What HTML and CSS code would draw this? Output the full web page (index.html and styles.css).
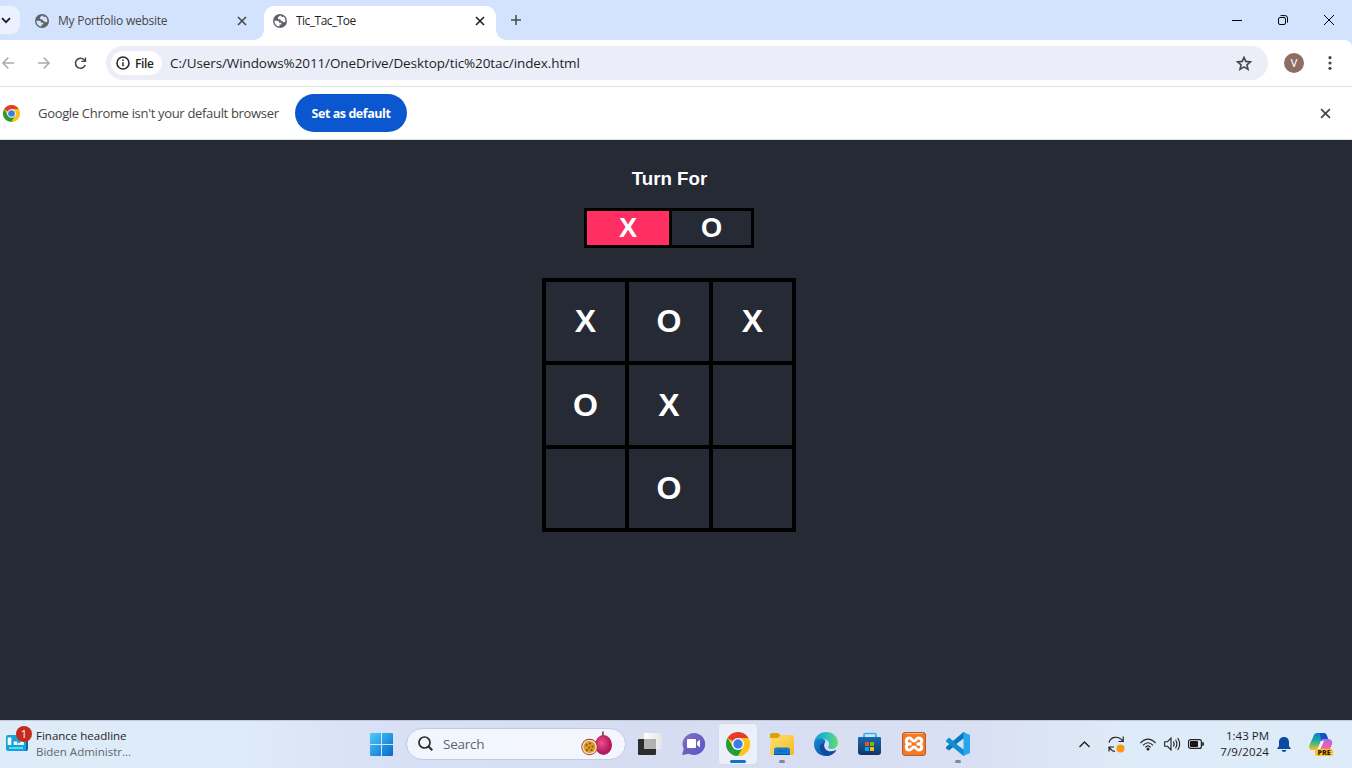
FILE: index.html
```html
<!DOCTYPE html>
<html lang="en">
<head>
<meta charset="utf-8">
<title>Tic_Tac_Toe</title>
<link rel="stylesheet" href="styles.css">
</head>
<body>
<svg class="defs" width="0" height="0" aria-hidden="true">
  <defs>
    <symbol id="globe" viewBox="0 0 14 14"><circle cx="7" cy="7" r="7" fill="#5f6368"/><path d="M7.800 1.500C6 2.300 4.600 3 5 4.500C5.600 5.800 7 4.900 7.600 5.900C8 7.200 9.700 7 10.200 7.900C10.600 8.600 11.800 8 12.400 7.400C12.600 5 11.500 3.400 10.300 2.600C9.700 3.500 8.600 3.100 7.800 1.500Z" fill="var(--tab-bg)"/><path d="M1.400 6.800H4C5.300 6.800 6.200 7.600 6.200 8.800H8.300V10.400H6.500V12.500C3.600 12.300 1.300 10 1.400 6.800Z" fill="var(--tab-bg)"/></symbol>
    <symbol id="cross" viewBox="0 0 10 10"><path d="M1 1L9 9M9 1L1 9" stroke="currentColor" stroke-width="1.600" fill="none"/></symbol>
    <symbol id="chrome" viewBox="0 0 24 24"><circle cx="12" cy="12" r="12" fill="#fbc116"/><path d="M12 12L1.610 6A12 12 0 0 1 22.390 6L12 6Z" fill="#e33b2e"/><path d="M1.610 6A12 12 0 0 0 12 24L17.200 15L12 12L6.800 15Z" fill="#249a41"/><path d="M12 6H22.390A12 12 0 0 1 12 24L17.200 15Z" fill="#fcc31a"/><circle cx="12" cy="12" r="6" fill="#fff"/><circle cx="12" cy="12" r="4.700" fill="#3a7cec"/></symbol>
  </defs>
</svg>

<header class="tabstrip">
  <div class="tab-search"><svg width="10" height="7" viewBox="0 0 10 7"><path d="M1 1.200L5 5.200L9 1.200" fill="none" stroke="#1f1f1f" stroke-width="1.800"/></svg></div>
  <div class="tab">
    <svg width="14" height="14"><use href="#globe"/></svg>
    <span class="tab-title">My Portfolio website</span>
    <svg class="tab-close" width="10" height="10"><use href="#cross"/></svg>
  </div>
  <div class="tab tab-active">
    <svg width="14" height="14"><use href="#globe"/></svg>
    <span class="tab-title title-game">Tic_Tac_Toe</span>
    <svg class="tab-close" width="10" height="10"><use href="#cross"/></svg>
  </div>
  <svg class="new-tab" width="10" height="10" viewBox="0 0 10 10"><path d="M5 0V10M0 5H10" stroke="#474747" stroke-width="1.500"/></svg>
  <div class="window-buttons">
    <svg width="10" height="10" viewBox="0 0 10 10"><path d="M0 5.500H10" stroke="#000"/></svg>
    <svg width="10" height="10" viewBox="0 0 10 10"><rect x=".5" y="2.500" width="7" height="7" rx="1.500" fill="none" stroke="#000"/><path d="M2.500 .6H7Q9.500 .6 9.500 3V7.600" fill="none" stroke="#000"/></svg>
    <svg width="10" height="10" viewBox="0 0 10 10"><path d="M0 0L10 10M10 0L0 10" stroke="#000"/></svg>
  </div>
</header>

<nav class="toolbar">
  <svg width="12" height="12" viewBox="0 0 12 12"><path d="M12 6H1M6.300 .6L.9 6L6.300 11.400" fill="none" stroke="#acacac" stroke-width="1.500"/></svg>
  <svg class="forward" width="12" height="12" viewBox="0 0 12 12"><path d="M0 6H11M5.700 .6L11.100 6L5.700 11.400" fill="none" stroke="#acacac" stroke-width="1.500"/></svg>
  <svg class="reload" width="13" height="13" viewBox="0 0 13 13"><path d="M11.200 8A5 5 0 1 1 10.200 2.900L11.500 4" fill="none" stroke="#474747" stroke-width="1.600"/><path d="M12.200 .4V5.100H7.300V3.700L10.800 3.700V.4Z" fill="#474747"/></svg>
  <div class="omnibox">
    <div class="file-chip">
      <svg width="14" height="14" viewBox="0 0 14 14"><circle cx="7" cy="7" r="6" fill="none" stroke="#2a2a2a" stroke-width="1.600"/><path d="M7 6.300V10.300M7 3.500V5" stroke="#2a2a2a" stroke-width="1.500"/></svg>
      <span>File</span>
    </div>
    <span class="url">C:/Users/Windows%2011/OneDrive/Desktop/tic%20tac/index.html</span>
    <svg class="star" width="16" height="15" viewBox="0 0 16 15"><path d="M8 1.400L9.800 5.400L14.400 5.900L10.900 8.800L12 13.400L8 10.900L4 13.400L5.100 8.800L1.600 5.900L6.200 5.400Z" fill="none" stroke="#474747" stroke-width="1.600"/></svg>
  </div>
  <div class="avatar">V</div>
  <svg class="menu-dots" width="4" height="14" viewBox="0 0 4 14"><circle cx="2" cy="1.700" r="1.600" fill="#474747"/><circle cx="2" cy="7" r="1.600" fill="#474747"/><circle cx="2" cy="12.300" r="1.600" fill="#474747"/></svg>
</nav>

<section class="infobar">
  <svg width="17" height="17"><use href="#chrome"/></svg>
  <span class="info-text">Google Chrome isn't your default browser</span>
  <button class="default-button">Set as default</button>
  <svg class="info-close" width="11" height="11"><use href="#cross"/></svg>
</section>

<main class="game">
  <h3 class="turn-heading">Turn For</h3>
  <div class="turn-box"><div class="turn turn-current">X</div><div class="turn turn-next">O</div></div>
  <div class="board">
    <div>X</div><div>O</div><div>X</div>
    <div>O</div><div>X</div><div></div>
    <div></div><div>O</div><div></div>
  </div>
</main>

<footer class="taskbar">
  <div class="widget">
    <div class="widget-icon">
      <svg width="22" height="17" viewBox="0 0 22 17"><path d="M8 1H20Q22 1 22 3V14Q22 16 20 16H8Z" fill="#0867ad"/><rect y="0" width="20" height="16" rx="2" fill="#17a3d8"/><path d="M3.500 2.500V10M9.500 6.500V10M16 6.500V10" stroke="#fff" stroke-width="3.600"/><path d="M12.800 8V10" stroke="#fff" stroke-width="2"/><path d="M3 13H17" stroke="#45e0ff" stroke-width="2"/></svg>
      <span class="badge">1</span>
    </div>
    <div class="widget-text"><span class="headline">Finance headline</span><span class="subline">Biden Administr...</span></div>
  </div>

  <svg class="start" width="23" height="23" viewBox="0 0 23 23"><defs><linearGradient id="win" gradientUnits="userSpaceOnUse" x1="0" y1="0" x2="23" y2="23"><stop stop-color="#49cdfb"/><stop offset="1" stop-color="#0569c9"/></linearGradient></defs><path d="M0 1Q0 0 1 0H11V11H0ZM12 0H22Q23 0 23 1V11H12ZM0 12H11V23H1Q0 23 0 22ZM12 12H23V22Q23 23 22 23H12Z" fill="url(#win)"/></svg>

  <div class="search">
    <svg width="15" height="15" viewBox="0 0 15 15"><circle cx="6.500" cy="6.500" r="5.500" fill="none" stroke="#2b2b2d" stroke-width="1.700"/><path d="M10.500 10.500L14.300 14.300" stroke="#2b2b2d" stroke-width="2"/></svg>
    <span>Search</span>
    <svg class="fruit" width="32" height="25" viewBox="0 0 32 25"><defs><radialGradient id="fr" cx=".4" cy=".4"><stop stop-color="#ee4f8b"/><stop offset="1" stop-color="#b3195c"/></radialGradient></defs><path d="M21 1L22.500 0L23 5H21Z" fill="#8a521f"/><ellipse cx="22.500" cy="14" rx="8.500" ry="10" fill="url(#fr)"/><circle cx="8.500" cy="16" r="8.200" fill="#9d3457"/><circle cx="8.500" cy="16" r="7.300" fill="#ffe5aa"/><circle cx="8.500" cy="16" r="6" fill="#d99b24"/><g fill="#805019"><circle cx="5.500" cy="14" r="1"/><circle cx="9" cy="12.500" r="1"/><circle cx="11.500" cy="15.500" r="1"/><circle cx="8" cy="16.500" r="1"/><circle cx="6" cy="19" r="1"/><circle cx="10.500" cy="19" r="1"/></g></svg>
  </div>

  <div class="apps">
    <div class="app"><svg width="24" height="24" viewBox="0 0 24 24"><defs><linearGradient id="tv"><stop stop-color="#fff"/><stop offset="1" stop-color="#e4e4e4"/></linearGradient></defs><rect x="6" y="1" width="18" height="16" rx="1" fill="url(#tv)"/><rect y="7" width="18" height="16" rx="1" fill="#2c2c2c"/><path d="M6 7H17Q18 7 18 8V17H6Z" fill="#b2b2b2"/></svg></div>
    <div class="app"><svg width="24" height="24" viewBox="0 0 24 24"><defs><linearGradient id="chat" x1="0" x2="1" y2="1"><stop stop-color="#6d84dc"/><stop offset=".35" stop-color="#7862ba"/><stop offset="1" stop-color="#5158cf"/></linearGradient></defs><path d="M12 1A11.500 11 0 1 1 6.500 21.800L1 23Q0 23 .3 22L1.700 17A11.500 11 0 0 1 12 1Z" fill="url(#chat)"/><rect x="5" y="7" width="9" height="9" rx="1" fill="#fff"/><path d="M15 10L18 7.800V15.500L15 13Z" fill="#fff"/></svg></div>
    <div class="app app-focused"><svg width="24" height="24"><use href="#chrome"/></svg><i></i></div>
    <div class="app"><svg width="24" height="24" viewBox="0 0 24 24"><defs><linearGradient id="fold" x2="1" y2="1"><stop stop-color="#ffe17a"/><stop offset="1" stop-color="#f6b922"/></linearGradient></defs><path d="M0 3Q0 1 2 1H8L11 4V8H0Z" fill="#dda105"/><path d="M0 6H8L11 3H22Q24 3 24 5V21Q24 23 22 23H2Q0 23 0 21Z" fill="url(#fold)"/><path d="M4 22V18Q4 15.500 6.500 15.500H17.500Q20 15.500 20 18V22Z" fill="#127bd0"/><path d="M4 22.500H20" stroke="#0a5595"/><path d="M7.500 19H16.500" stroke="#0b5da5"/></svg><i></i></div>
    <div class="app"><svg width="24" height="24" viewBox="0 0 24 24"><defs><linearGradient id="edge" x1="0" x2="1"><stop stop-color="#139bd5"/><stop offset=".55" stop-color="#2ec0c1"/><stop offset="1" stop-color="#68df62"/></linearGradient><linearGradient id="edge2" x2="1" y2="1"><stop stop-color="#1689d9"/><stop offset="1" stop-color="#0c3e90"/></linearGradient></defs><path d="M0 11C1 4 6 0 12 0C19 0 24 5 24 10.500C24 14.500 21 17 17.500 17C14.500 17 13.500 15.500 14.400 14.300C16 12 14.800 7.500 9.500 7C5 6.600 1.500 8.500 0 11Z" fill="url(#edge)"/><path d="M0 12C0 8 4.500 6 8.600 7C12 7.800 12 9.500 10.800 10.500C7 13 8.500 18.500 13 20C16.500 21.200 19.500 19.500 22 18C20 22 16.500 24 12 24C5 24 0 19 0 12Z" fill="url(#edge2)"/><path d="M10.800 10.500C6.500 11 5 14.500 6.500 18C8 21.500 12 24 15.500 23.500C19 22.500 21 20.500 22.400 18C15 21.500 8 17.500 10.800 10.500Z" fill="#10499f"/></svg></div>
    <div class="app"><svg width="24" height="24" viewBox="0 0 24 24"><defs><linearGradient id="store" x2="0" y2="1"><stop stop-color="#146bb4"/><stop offset="1" stop-color="#143562"/></linearGradient></defs><path d="M6 7V3Q6 1.500 7.500 1.500H16.500Q18 1.500 18 3V7" fill="none" stroke="#25b7ed" stroke-width="1.700"/><path d="M0 6Q0 5 1 5H22Q23 5 23 6V20Q23 23 20 23H3Q0 23 0 20Z" fill="url(#store)"/><path d="M7 10H11V14H7Z" fill="#f25022"/><path d="M12 10H16V14H12Z" fill="#7fba00"/><path d="M7 15H11V19H7Z" fill="#00a4ef"/><path d="M12 15H16V19H12Z" fill="#ffb900"/></svg></div>
    <div class="app"><svg width="24" height="24" viewBox="0 0 24 24"><rect x=".5" y=".5" width="23" height="23" rx="2.500" fill="#f07a28" stroke="#c05a20"/><path d="M3 1.500H21" stroke="#ffb27c"/><path d="M9.500 12H7.500C3.300 12 3.300 6 7.500 6C9.800 6 10 9 12 9S14.200 6 16.500 6C20.700 6 20.700 12 16.500 12H14.500M7.500 12C3.300 12 3.300 18 7.500 18C9.800 18 10 15 12 15S14.200 18 16.500 18C20.700 18 20.700 12 16.500 12" fill="none" stroke="#fff" stroke-width="3" stroke-linejoin="round"/></svg></div>
    <div class="app"><svg width="24" height="24" viewBox="0 0 24 24"><path d="M17.500 0L24 3V21L17.500 24L14 20V4Z" fill="#2aa4ee"/><path d="M17.500 0V6.500L3 18.500L0 16.500V15Z" fill="#0879bf"/><path d="M0 8.500L3 5.500L17.500 17.500V24L0 9.500Z" fill="#118ed3"/><path d="M17.500 6.500V17.500L10.500 12Z" fill="#d8e0f3"/></svg><i></i></div>
  </div>

  <div class="tray">
    <svg width="11" height="7" viewBox="0 0 11 7"><path d="M.5 6L5.500 1L10.500 6" fill="none" stroke="#1b1b1b" stroke-width="1.400"/></svg>
    <svg class="sync" width="17" height="17" viewBox="0 0 17 17"><path d="M1 6.500C2.500 .5 10.500-.8 14.700 5M15.200 .5V5.500H10.500M1 15.500V11H6M1.500 11.500C2.500 13.700 4.500 15 7 15.500" fill="none" stroke="#222" stroke-width="1.200"/><circle cx="12.500" cy="12.500" r="4" fill="#ff970f"/></svg>
    <svg class="wifi" width="16" height="13" viewBox="0 0 16 13"><path d="M.5 5Q8-2.800 15.500 5M3 7.300Q8 2.200 13 7.300M5.300 9.300Q8 6.600 10.700 9.300" fill="none" stroke="#222" stroke-width="1.200"/><circle cx="8" cy="11" r="1.500" fill="#222"/></svg>
    <svg class="volume" width="17" height="14" viewBox="0 0 17 14"><path d="M.7 4.700H3.500L7 1.200V12.800L3.500 9.300H.7ZM9.300 4.500Q11 7 9.300 9.500M11.500 2.800Q14.300 7 11.500 11.200M13.700 1Q17.700 7 13.700 13" fill="none" stroke="#222" stroke-width="1.100"/></svg>
    <svg class="battery" width="16" height="10" viewBox="0 0 16 10"><rect x=".6" y=".6" width="12.800" height="8.800" rx="2" fill="none" stroke="#222" stroke-width="1.200"/><rect x="2" y="2" width="8" height="6" rx="1" fill="#171717"/><path d="M15 3.300V6.700" stroke="#222" stroke-width="1.700"/></svg>
    <div class="clock"><span class="time">1:43 PM</span><span class="date">7/9/2024</span></div>
    <svg class="bell" width="14" height="15" viewBox="0 0 14 15"><path d="M7 0C3.600 0 2 2.300 2 5.400V9L0 12H14L12 9V5.400C12 2.300 10.400 0 7 0ZM4.500 13H9.500Q9 15 7 15T4.500 13Z" fill="#0b4aa0"/></svg>
    <div class="copilot">
      <svg width="24" height="23" viewBox="0 0 24 23"><defs><linearGradient id="cp1" x2="0" y2="1"><stop stop-color="#087be3"/><stop offset=".5" stop-color="#28ae94"/><stop offset="1" stop-color="#f5c225"/></linearGradient><linearGradient id="cp2" x2="0" y2="1"><stop stop-color="#ac65f1"/><stop offset=".5" stop-color="#ed62ad"/><stop offset="1" stop-color="#ff9e4d"/></linearGradient></defs><path d="M5 2Q6 0 8 0H15Q17 0 18 3L19 6H15Q13 6 12 8L9 15Q8 17 5 17H3Q-1 17 .5 12Z" fill="url(#cp1)"/><path d="M11 0H15Q17 0 18 3L19 6H15Q13 6 12 8Z" fill="#174fc4"/><path d="M15 6H20Q24 7 23 11L20 19Q19 22 16 22H9Q7 22 7 18Q9 18 10 15L13 8Q13.500 6 15 6Z" fill="url(#cp2)"/><path d="M12 8H15L11 17H7Q9 16 10 13Z" fill="#f3eff7"/></svg>
      <span>PRE</span>
    </div>
  </div>
</footer>
</body>
</html>
```
FILE: styles.css
```css
* { box-sizing: border-box; }
body { margin: 0; width: 1352px; height: 768px; overflow: hidden; display: flex; flex-direction: column; background: #fff; font-family: "Open Sans", "Noto Sans", sans-serif; font-size: 12px; color: #1f1f1f; }
svg { display: block; flex: none; overflow: visible; }
span { white-space: nowrap; }
.defs { position: absolute; }

.tabstrip { --tab-bg: #d3e3fd; height: 40px; flex: none; display: flex; align-items: center; background: #d3e3fd; }
.tab-search { width: 20px; height: 28px; border-radius: 0 9px 9px 0; background: #ebf1fe; display: flex; align-items: center; padding-left: 1px; }
.tab { width: 244px; height: 34px; margin-top: 6px; padding: 0 17px 5px 15px; display: flex; align-items: center; }
.tab-title { margin-left: 9px; color: #474747; letter-spacing: -.25px; }
.title-game { letter-spacing: -.52px; }
.tab-close { margin-left: auto; color: #474747; }
.tab-active { --tab-bg: #fff; position: relative; width: 232px; padding: 0 11px 5px 9px; background: #fff; border-radius: 10px 10px 0 0; }
.tab-active::before, .tab-active::after { content: ""; position: absolute; bottom: 0; width: 10px; height: 10px; }
.tab-active::before { left: -10px; background: radial-gradient(circle at 0 0, transparent 9.500px, #fff 10px); }
.tab-active::after { right: -10px; background: radial-gradient(circle at 100% 0, transparent 9.500px, #fff 10px); }
.tab-active .tab-title, .tab-active .tab-close { color: #1f1f1f; }
.new-tab { margin-left: 15px; }
.window-buttons { margin-left: auto; margin-right: 18px; display: flex; gap: 36px; }

.toolbar { height: 47px; flex: none; border-bottom: 1px solid #dfe1e1; display: flex; align-items: center; padding-left: 2px; background: linear-gradient(#fff, #fff); border-top-right-radius: 8px; box-shadow: 8px -8px 0 -8px #d3e3fd; }
.forward { margin-left: 24px; }
.reload { margin-left: 24px; }
.omnibox { width: 1162px; height: 34px; margin-left: 19px; background: #ebeef8; border-radius: 17px; display: flex; align-items: center; padding: 0 16px 0 5px; }
.file-chip { width: 51px; height: 24px; background: #fff; border-radius: 12px; display: flex; align-items: center; padding-left: 5px; gap: 5px; font-size: 12px; font-weight: 600; letter-spacing: -.35px; }
.url { margin-left: 8px; font-size: 13.500px; letter-spacing: -.1px; }
.star { margin-left: auto; }
.avatar { width: 20px; height: 20px; margin-left: 16px; border-radius: 50%; background: #8d6e63; color: #fff; font: 11px/21px Roboto, sans-serif; text-align: center; }
.menu-dots { margin-left: 24px; }

.infobar { height: 53px; flex: none; border-bottom: 1px solid #dfe1e1; display: flex; align-items: center; padding-left: 3px; padding-right: 21px; }
.info-text { width: 241px; margin-left: 18px; font-size: 13px; color: #474747; letter-spacing: -.32px; }
.default-button { width: 112px; height: 38px; margin-left: 16px; padding: 0; border: 0; border-radius: 19px; background: #0b57d0; color: #fff; font: 700 12.500px "Open Sans", sans-serif; letter-spacing: -.45px; }
.info-close { margin-left: auto; color: #474747; }

.game { height: 580px; flex: none; display: flex; flex-direction: column; align-items: center; padding: 28px 14px 0 0; background: #252a34; color: #fff; font-family: "Liberation Sans", Arial, sans-serif; font-weight: 700; }
.turn-heading { height: 22px; margin: 0 0 0 1px; font-size: 18.720px; line-height: 22px; }
.turn-box { width: 170px; height: 40px; margin-top: 18px; border: 3px solid #000; display: grid; grid-template-columns: 82px 79px; gap: 3px; background: #000; font-size: 27.200px; line-height: 34px; text-align: center; }
.turn-current { background: #ff2e63; }
.turn-next { background: #252a34; }
.board { width: 254px; height: 254px; margin-top: 30px; border: 4px solid #000; background: #000; display: grid; grid-template: 79px 80px 79px / 79px 80px 79px; gap: 4px; font-size: 32px; line-height: 78px; text-align: center; }
.board > div { background: #252a34; }
.board > :nth-child(n+4):nth-child(-n+6) { line-height: 80px; }

.taskbar { height: 48px; flex: none; border-top: 1px solid #c2cad9; display: flex; align-items: center; background: linear-gradient(90deg, #deebf8 0, #deebf8 240px, #d8e1f6 370px, #d6ddf3 650px, #d9e0f3 980px, #deebf8 1130px, #deebf8 100%); }
.widget { width: 370px; display: flex; align-items: center; padding-left: 6px; }
.widget-icon { position: relative; padding-top: 1px; margin-top: -4px; }
.badge { position: absolute; left: 10px; top: -8px; width: 16px; height: 16px; border-radius: 50%; background: #c42b1c; color: #fff; font-size: 11px; line-height: 16px; text-align: center; }
.widget-text { display: flex; flex-direction: column; margin-left: 8px; margin-top: -2px; font-size: 11.500px; line-height: 16px; }
.subline { color: #62676e; }
.search { width: 220px; height: 32px; margin-left: 13px; margin-top: -2px; border: 1px solid #c2ccdf; border-radius: 16px; background: linear-gradient(90deg, #f1f6fe, #f4f6fd); display: flex; align-items: center; padding: 0 12px 0 11px; font-size: 13.500px; color: #60646d; }
.search span { margin-left: 10px; letter-spacing: -.25px; }
.fruit { margin-left: auto; }
.apps { display: flex; align-items: center; gap: 6px; margin-left: 5px; margin-top: -1px; }
.app { width: 38px; height: 40px; display: flex; flex-direction: column; align-items: center; padding-top: 8px; border-radius: 4px; }
.app i { width: 6px; height: 3px; margin-top: 4px; border-radius: 2px; background: #858891; }
.app-focused { background: #ebeff9; box-shadow: 0 0 0 1px #d8dcea; }
.app-focused i { width: 16px; background: #0873d1; }
.tray { display: flex; align-items: center; margin-left: auto; padding-right: 19px; margin-top: -1px; }
.sync { margin-left: 18px; }
.wifi { margin-left: 15px; }
.volume { margin-left: 8px; }
.battery { margin-left: 7px; }
.clock { width: 57px; margin-left: 8px; display: flex; flex-direction: column; align-items: flex-end; font-size: 11.500px; line-height: 16px; margin-top: -1px; }
.date { letter-spacing: .1px; }
.bell { margin-left: 8px; }
.copilot { position: relative; margin-left: 18px; }
.copilot span { position: absolute; left: 6px; top: 16px; width: 18px; height: 7px; border-radius: 2px; background: #ffc414; color: #222; font: 800 7px/7px "Open Sans", sans-serif; text-align: center; }
```
